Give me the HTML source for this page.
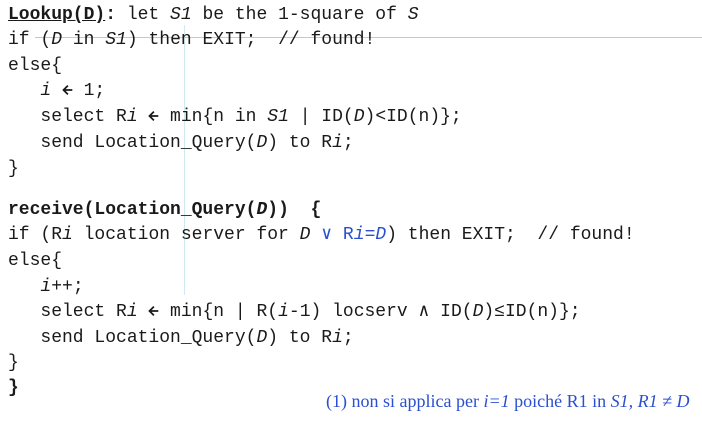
<!DOCTYPE html>
<html><head><meta charset="utf-8"><style>
body{margin:0;width:702px;height:422px;background:#fff;position:relative;overflow:hidden;font-family:"Liberation Mono","DejaVu Sans Mono",monospace;font-size:18px;color:#1a1a1a}
.l{position:absolute;left:8px;height:24px;line-height:24px;white-space:pre}
i{font-style:italic}
.a{display:inline-block;width:10.8px;height:12px;vertical-align:-1px}
.b{color:#2a4fd0}
.note{position:absolute;left:326px;top:391px;font-family:"Liberation Serif",serif;font-size:18px;color:#2a4fd0;white-space:pre}
.hl{position:absolute;left:35px;top:37px;width:667px;height:1px;background:#9fd6e3}
.vl{position:absolute;left:184px;top:25px;width:1px;height:270px;background:#cfeaf0}
</style></head><body>
<div class="hl"></div><div class="vl"></div>
<svg width="0" height="0" style="position:absolute"><defs><symbol id="ar" viewBox="0 0 11 12"><path d="M10.5 6H1.5M6 1.5L1.5 6L6 10.5" fill="none" stroke="#1a1a1a" stroke-width="1.8"/></symbol></defs></svg>
<div class="l" style="top:3px"><b><u>Lookup(D)</u>:</b> let <i>S1</i> be the 1-square of <i>S</i></div>
<div class="l" style="top:28px">if (<i>D</i> in <i>S1</i>) then EXIT;  // found!</div>
<div class="l" style="top:54px">else{</div>
<div class="l" style="top:79px">   <i>i</i> <svg class="a"><use href="#ar"/></svg> 1;</div>
<div class="l" style="top:105px">   select R<i>i</i> <svg class="a"><use href="#ar"/></svg> min{n in <i>S1</i> | ID(<i>D</i>)&lt;ID(n)};</div>
<div class="l" style="top:131px">   send Location_Query(<i>D</i>) to R<i>i</i>;</div>
<div class="l" style="top:157px">}</div>
<div class="l" style="top:198px"><b>receive(Location_Query(<i>D</i>))  {</b></div>
<div class="l" style="top:223px">if (R<i>i</i> location server for <i>D</i> <span class="b">∨ R<i>i</i>=<i>D</i></span>) then EXIT;  // found!</div>
<div class="l" style="top:249px">else{</div>
<div class="l" style="top:275px">   <i>i</i>++;</div>
<div class="l" style="top:300px">   select R<i>i</i> <svg class="a"><use href="#ar"/></svg> min{n | R(<i>i</i>-1) locserv ∧ ID(<i>D</i>)≤ID(n)};</div>
<div class="l" style="top:326px">   send Location_Query(<i>D</i>) to R<i>i</i>;</div>
<div class="l" style="top:351px">}</div>
<div class="l" style="top:376px"><b>}</b></div>
<div class="note">(1) non si applica per <i>i=1</i> poiché R1 in <i>S1, R1 ≠ D</i></div>
</body></html>
